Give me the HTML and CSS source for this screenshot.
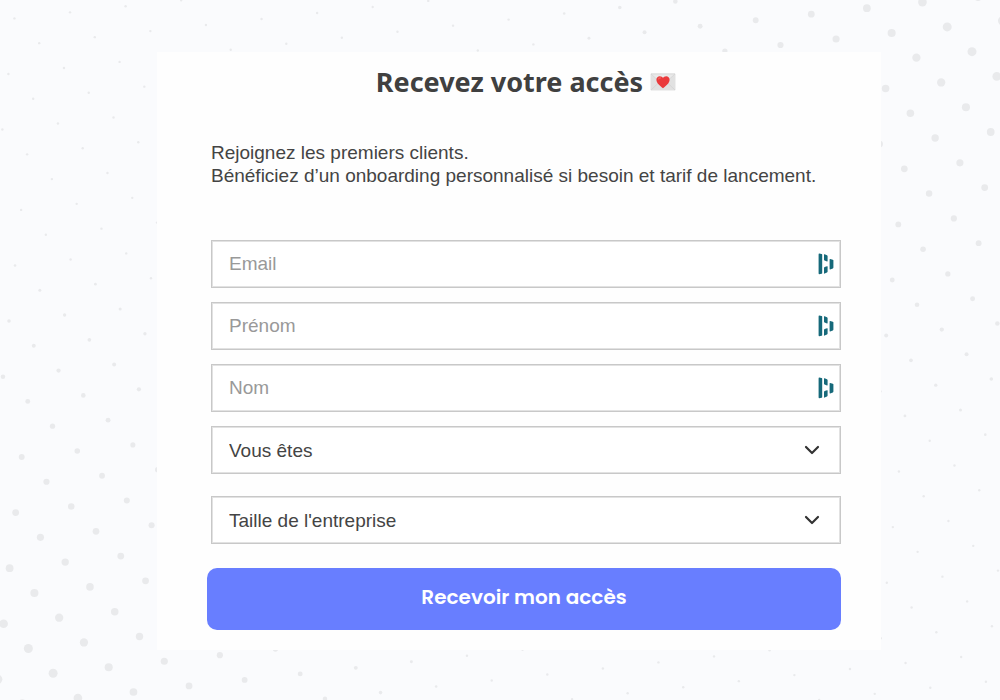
FILE: index.html
```html
<!DOCTYPE html>
<html lang="fr">
  <head>
    <meta charset="UTF-8" />
    <meta name="viewport" content="width=device-width, initial-scale=1.0" />
    <title>Recevez votre accès</title>
    <link rel="stylesheet" href="styles.css">
  </head>
  <body>
    <svg id="dots" class="dots" viewBox="0 0 1000 700" preserveAspectRatio="xMidYMid slice" aria-hidden="true"></svg>

    <!-- Shared icons -->
    <svg class="icon-defs" aria-hidden="true">
      <symbol id="icon-key" viewBox="0 0 16 22">
        <path d="M0.6 1.2Q0.6 0.6 1.2 0.6L3.6 1Q4.2 1.2 4.2 1.8V20Q4.2 20.6 3.6 20.8L1.2 21.2Q0.6 21.2 0.6 20.6Z" />
        <path d="M6 1.6Q6 1 6.6 1.2L9 2.2Q9.6 2.5 9.6 3.1V8Q9.6 8.6 9 8.4L6.6 7.6Q6 7.3 6 6.7Z" />
        <path d="M6 15Q6 14.4 6.6 14.1L9 13.2Q9.6 13 9.6 13.6V18.6Q9.6 19.2 9 19.5L6.6 20.6Q6 20.8 6 20.2Z" />
        <path d="M11.6 6.4Q11.6 5.8 12.2 5.9L14.8 6.7Q15.4 7 15.4 7.6V14.6Q15.4 15.2 14.8 15.5L12.2 16.4Q11.6 16.6 11.6 16Z" />
      </symbol>
      <symbol id="icon-chevron" viewBox="0 0 16 10">
        <path d="M2 2L8 8L14 2" fill="none" stroke="currentColor" stroke-width="2.2" stroke-linecap="round" stroke-linejoin="round" />
      </symbol>
    </svg>

    <main class="page">
      <form class="card">
        <h1>
          Recevez votre accès
          <svg class="letter" viewBox="0 0 26 18" role="img" aria-label="Lettre d'amour">
            <rect x="0.5" y="0.5" width="25" height="17" rx="1" fill="#e1e1e1" />
            <path d="M1 17L10 8.5M25 17L16 8.5" stroke="#d6d6d6" fill="none" />
            <path d="M1 1L11.5 10.5Q13 11.7 14.5 10.5L25 1Z" fill="#e9e9e9" stroke="#d2d2d2" stroke-width="0.7" />
            <path d="M13 15.2C10.5 13 6.4 10.3 6.4 6.7C6.4 4.5 8 3.2 9.8 3.2C11.3 3.2 12.4 4 13 5C13.6 4 14.7 3.2 16.2 3.2C18 3.2 19.6 4.5 19.6 6.7C19.6 10.3 15.5 13 13 15.2Z" fill="#ea3a3c" />
            <path d="M8.5 6Q9 4.8 10.5 4.9" stroke="#f4605c" stroke-width="1.2" stroke-linecap="round" fill="none" />
          </svg>
        </h1>
        <p class="intro">
          Rejoignez les premiers clients.<br />
          Bénéficiez d’un onboarding personnalisé si besoin et tarif de lancement.
        </p>

        <div class="field">
          <input type="email" name="email" placeholder="Email" aria-label="Email" />
          <svg class="key" aria-hidden="true"><use href="#icon-key" /></svg>
        </div>
        <div class="field">
          <input type="text" name="prenom" placeholder="Prénom" aria-label="Prénom" />
          <svg class="key" aria-hidden="true"><use href="#icon-key" /></svg>
        </div>
        <div class="field">
          <input type="text" name="nom" placeholder="Nom" aria-label="Nom" />
          <svg class="key" aria-hidden="true"><use href="#icon-key" /></svg>
        </div>
        <div class="field field-select">
          <select name="profil" aria-label="Vous êtes">
            <option>Vous êtes</option>
          </select>
          <svg class="chevron" aria-hidden="true"><use href="#icon-chevron" /></svg>
        </div>
        <div class="field field-select">
          <select name="taille" aria-label="Taille de l'entreprise">
            <option>Taille de l'entreprise</option>
          </select>
          <svg class="chevron" aria-hidden="true"><use href="#icon-chevron" /></svg>
        </div>

        <button type="submit">Recevoir mon accès</button>
      </form>
    </main>

    <script>
      // Diagonal grid of dots, larger near the bottom left and top right corners
      const dots = document.getElementById("dots");
      const stepDown = 24.77;
      const stepUp = 30.81;

      for (let m = -30; m < 50; m++) {
        for (let n = -30; n < 50; n++) {
          const x = 21.7 + m * stepDown + n * stepUp;
          const y = 457 + m * stepDown - n * stepUp;
          if (x < -5 || x > 1005 || y < -5 || y > 705) continue;

          const distance = Math.min(Math.hypot(x, 700 - y), Math.hypot(1000 - x, y));
          const dot = document.createElementNS("http://www.w3.org/2000/svg", "circle");
          dot.setAttribute("cx", x);
          dot.setAttribute("cy", y);
          dot.setAttribute("r", Math.max(1.2, 5 - distance * 0.0085));
          dots.appendChild(dot);
        }
      }
    </script>
  </body>
</html>
```

FILE: styles.css
```css
* {
  box-sizing: border-box;
}
body {
  margin: 0;
  min-height: 100vh;
  background-color: #fafbfd;
  color: #444;
  font-family: "Helvetica Neue", "Liberation Sans", Arial, sans-serif;
  font-size: 19px;
}
.dots {
  position: fixed;
  top: 0;
  left: 0;
  width: 100%;
  height: 100%;
  z-index: -1;
  fill: #e9eaec;
}
.icon-defs {
  position: absolute;
  width: 0;
  height: 0;
}
.page {
  padding: 52px 119px 50px 157px;
}
.card {
  padding: 12px 40px 20px 54px;
  background-color: #fefefe;
}
h1 {
  display: flex;
  justify-content: center;
  align-items: center;
  gap: 7px;
  margin: 0 0 41px;
  color: #404040;
  font-family: Tahoma, "Noto Sans", sans-serif;
  font-size: 27px;
  line-height: 36px;
}
.letter {
  width: 26px;
  height: 18px;
}
.intro {
  margin: 0 0 53px;
  line-height: 23px;
}
.field {
  display: flex;
  align-items: center;
  height: 48px;
  margin-bottom: 14px;
  border: 1px solid #c8c8c8;
  background-color: #fff;
  box-shadow: inset 0 0 0 1px #e2e2e2;
}
.field input,
.field select {
  flex: 1;
  min-width: 0;
  height: 100%;
  padding: 0 17px;
  border: 0;
  outline: 0;
  background: transparent;
  color: #444;
  font: inherit;
}
.field input::placeholder {
  color: #999;
  opacity: 1;
}
.field select {
  appearance: none;
}
.field-select {
  position: relative;
  margin-bottom: 22px;
}
.key {
  width: 16px;
  height: 22px;
  margin-right: 6px;
  fill: #16697a;
}
.chevron {
  position: absolute;
  right: 20px;
  width: 16px;
  height: 10px;
  color: #333;
  pointer-events: none;
}
button {
  display: block;
  width: calc(100% + 4px);
  height: 62px;
  margin: 24px 0 0 -4px;
  padding: 0 0 4px;
  border: 0;
  border-radius: 10px;
  background-color: #687eff;
  color: #fff;
  font-family: Poppins, Lato, sans-serif;
  font-size: 20px;
  font-weight: 600;
  cursor: pointer;
}
```
